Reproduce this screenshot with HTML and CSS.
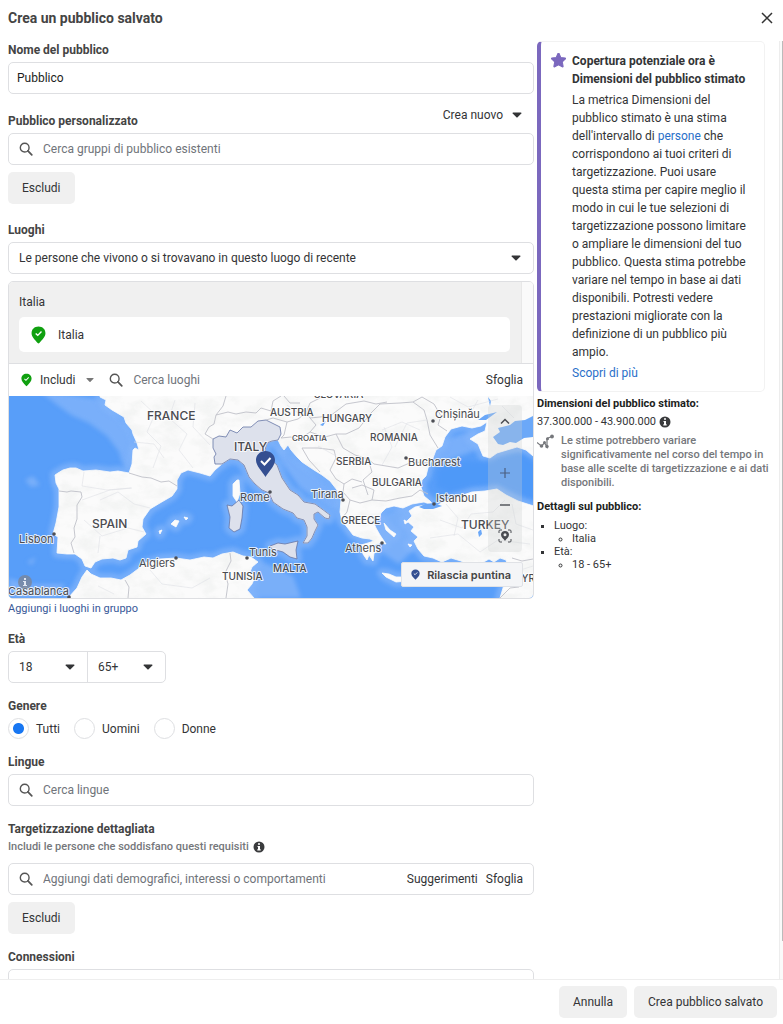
FILE: index.html
```html
<!DOCTYPE html>
<html lang="it">

<head>
    <meta charset="utf-8" />
    <meta name="viewport" content="width=device-width, initial-scale=1">
    <title>Crea un pubblico salvato</title>
    <link rel="stylesheet" href="styles.css">
</head>

<body>
    <!-- shared icons -->
    <svg class="defs" width="0" height="0" aria-hidden="true">
        <symbol id="search" viewBox="0 0 16 16">
            <circle cx="6.5" cy="6.5" r="5" fill="none" stroke="currentColor" stroke-width="1.6" />
            <path d="M10.2 10.2l4.4 4.4" stroke="currentColor" stroke-width="2" stroke-linecap="round" />
        </symbol>
        <symbol id="caret" viewBox="0 0 10 6">
            <path d="M1 .5h8q.8.3.3 1L5.6 5.3q-.6.5-1.2 0L.7 1.5Q.2.8 1 .5z" fill="currentColor" />
        </symbol>
        <symbol id="pin" viewBox="0 0 16 18">
            <path d="M8 0C3.6 0 .6 3 .6 7c0 4.300 4.100 7.200 6.500 10.500q.9 1 1.800 0C11.300 14.200 15.400 11.300 15.400 7 15.400 3 12.400 0 8 0z" fill="currentColor" />
            <path d="M5 7.300l2.200 2.100 4-4.100" fill="none" stroke="#fff" stroke-width="1.500" />
        </symbol>
        <symbol id="info" viewBox="0 0 12 12">
            <circle cx="6" cy="6" r="5.500" fill="currentColor" />
            <path d="M5 2.200h2v1.600H5zM4.500 4.900H7v3.400h.7v1.200H4.300V8.300H5V6h-.5z" fill="#fff" />
        </symbol>
    </svg>

    <div class="dialog">
        <header class="header">
            <h1>Crea un pubblico salvato</h1>
            <button type="button" class="close" aria-label="Chiudi">
                <svg width="12" height="12" viewBox="0 0 12 12"><path d="M1 1l10 10M11 1L1 11" stroke="#333" stroke-width="1.500" /></svg>
            </button>
        </header>

        <div class="content">
            <main class="main">
                <form class="form" id="audience">
                    <div class="field">
                        <label for="name">Nome del pubblico</label>
                        <input class="box name" id="name" type="text" value="Pubblico">
                    </div>

                    <div class="field custom">
                        <div class="label-row">
                            <label for="custom">Pubblico personalizzato</label>
                            <button type="button" class="create">Crea nuovo <svg class="caret"><use href="#caret" /></svg></button>
                        </div>
                        <div class="box search">
                            <svg class="glass"><use href="#search" /></svg>
                            <input id="custom" type="text" placeholder="Cerca gruppi di pubblico esistenti">
                        </div>
                        <button type="button" class="btn">Escludi</button>
                    </div>

                    <div class="field places">
                        <label for="place-type">Luoghi</label>
                        <div class="select box">
                            <select id="place-type">
                                <option>Le persone che vivono o si trovavano in questo luogo di recente</option>
                            </select>
                            <svg class="caret"><use href="#caret" /></svg>
                        </div>

                        <div class="geo">
                            <div class="chosen">
                                <div class="chosen-list">
                                    <p>Italia</p>
                                    <div class="place"><svg class="pin-big"><use href="#pin" /></svg>Italia</div>
                                </div>
                                <div class="track"></div>
                            </div>
                            <div class="geo-bar">
                                <button type="button" class="include"><svg class="pin-small"><use href="#pin" /></svg>Includi<svg class="caret"><use href="#caret" /></svg></button>
                                <svg class="glass"><use href="#search" /></svg>
                                <input type="text" aria-label="Cerca luoghi" placeholder="Cerca luoghi">
                                <button type="button" class="plain">Sfoglia</button>
                            </div>
                            <div class="map">
                                <svg class="map-art" viewBox="9 396 524 202" preserveAspectRatio="xMidYMid slice">
                                    <defs>
                                        <path id="europe" d="M100 390L100 397 106 400 105 405 112 410 124 417 126 423 132 430 133 434 137 443 139 450 135 448 133 450 132 464 129 473 118 471 110 472 96 470 83 471 76 468 70 468 63 470 58 473 55 475 56 483 59 489 59 507 56 523 53 534 58 537 57 553 67 554 75 554 82 559 85 566 91 568 95 562 102 559 113 558 120 560 126 558 128 550 137 547 138 541 146 534 142 527 143 519 150 509 160 503 172 496 177 489 177 480 181 473 188 470 200 473 210 476 215 470 222 464 230 459 238 460 244 465 249 477 255 484 262 490 269 493 273 502 283 509 293 513 297 518 304 520 307 527 307 536 303 543 308 543 312 538 315 531 318 525 314 519 314 514 318 512 325 518 329 519 330 515 322 509 315 504 304 502 298 495 290 490 282 478 277 465 269 458 265 450 267 443 272 441 278 440 281 446 284 450 288 445 291 450 297 457 302 462 314 470 322 475 330 481 337 490 341 500 340 512 342 521 347 527 353 535 362 538 370 539 374 541 368 543 361 545 363 554 367 560 369 555 373 561 374 553 377 552 374 545 380 543 386 544 380 535 376 528 373 521 374 517 379 519 381 513 386 508 394 506 403 508 412 504 424 502 434 506 430 501 424 496 421 487 422 480 426 476 428 468 433 458 436 450 442 446 445 437 451 429 462 426 472 428 481 426 487 422 485 431 478 434 470 439 478 444 483 456 490 458 497 453 507 450 517 447 526 450 540 462V390z" />
                                        <path id="turkey" d="M434 507L445 501 460 496 472 492 485 491 497 489 506 495 518 501 540 508V610H498L500 598 503 588 506 577 508 567 506 560 500 558 494 562 489 559 482 563 472 567 461 561 451 558 442 562 433 558 424 556 418 549 414 541 418 537 411 531 414 527 407 521 412 516 409 511 415 507 425 505z" />
                                        <path id="africa" d="M60 610L68 598 77 588 82 577 87 570 91 574 100 578 111 578 121 580 130 575 138 569 145 563 160 559 176 558 190 560 204 557 213 558 222 554 233 552 243 556 251 557 258 562 252 567 250 572 255 577 252 584 247 590 254 598V610z" />
                                        <path id="isles" d="M233 484L237 480 239 480 240 493 237 502 233 496zM382 573L389 574 396 577 405 577 408 581 396 582 386 577zM171 524L175 520 179 521 176 527zM184 517L188 518 186 520zM159 531L162 530 160 534zM384 523L390 530 396 534 394 537 386 530zM404 520L408 522 405 524zM408 544L412 545 410 547z" />
                                        <path id="italy" d="M213 439L219 436 226 437 230 430 237 433 243 427 251 427 258 421 266 420 280 427 281 434 278 440 272 441 267 443 265 450 269 458 277 465 282 478 290 490 298 495 304 502 315 504 322 509 330 515 329 519 325 518 318 512 314 514 314 519 318 525 315 531 312 538 308 543 303 543 307 536 307 527 304 520 297 518 293 513 283 509 273 502 269 493 262 490 255 484 249 477 244 465 238 460 230 459 222 464 215 464 214 457 216 454 213 448zM227 505L232 506 239 500 243 506 242 518 240 529 234 532 229 528 230 517zM270 546L278 543 285 544 298 541 296 550 297 559 290 557 283 552 272 549z" />
                                        <filter id="soft"><feGaussianBlur stdDeviation="2" /></filter>
                                        <filter id="relief" x="0" y="0" width="100%" height="100%">
                                            <feTurbulence type="fractalNoise" baseFrequency=".05 .08" numOctaves="4" seed="8" />
                                            <feColorMatrix values="0 0 0 0 .72  0 0 0 0 .75  0 0 0 0 .73  1.800 0 0 0 -.75" />
                                        </filter>
                                        <clipPath id="land"><use href="#europe" /><use href="#turkey" /><use href="#africa" /></clipPath>
                                    </defs>
                                    <path d="M9 396h524v202H9z" fill="#589ef9" />
                                    <!-- shallow water -->
                                    <g fill="#84b5fa" opacity=".75" filter="url(#soft)">
                                        <path d="M38 390L56 404 71 415 89 423 107 436 119 452 122 463 128 472 136 450 130 430 105 400z" />
                                        <path d="M25 480L33 476 40 485 31 487zM27 562L36 557 32 565zM268 440L282 448 330 486 342 504 334 512 300 488 282 464zM9 578L27 584 65 584 57 598H9zM345 530L415 502 423 540 399 564 375 548zM425 445L475 430 482 448 435 465zM245 560L265 563 293 576 301 598H245z" />
                                    </g>
                                    <g fill="none" stroke="#83b5fb" stroke-width="10" stroke-linejoin="round" opacity=".7" filter="url(#soft)">
                                        <use href="#europe" /><use href="#turkey" /><use href="#africa" /><use href="#isles" /><use href="#italy" />
                                    </g>
                                    <path d="M437 470Q455 458 480 462L505 456 520 453 540 462V502L510 490 497 484 473 486 450 492 436 487z" fill="#4c97f8" opacity=".7" filter="url(#soft)" />
                                    <g fill="#fbfbfb" stroke="#fbfbfb" stroke-width=".8">
                                        <use href="#europe" /><use href="#turkey" /><use href="#africa" /><use href="#isles" />
                                    </g>
                                    <path d="M9 396h524v202H9z" filter="url(#relief)" clip-path="url(#land)" opacity=".35" />
                                    <!-- Azov, Marmara, lakes -->
                                    <path d="M493 437L500 432 498 428 510 425 515 421 525 420 533 416V437L524 438 516 443 510 442 503 445 498 444zM419 507L425 504 434 503 442 506 433 509 424 509zM478 532L481 529 482 534 479 537zM320 425L326 421 323 426zM478 420L485 415 497 412 486 420zM488 397L491 401 490 406z" fill="#6ba8f8" />
                                    <use href="#italy" fill="#dde1ec" stroke="#6676a6" stroke-width=".8" />
                                    <!-- country borders -->
                                    <g fill="none" stroke="#bfc1c8" stroke-width=".9" stroke-linejoin="round">
                                        <path d="M129 473L142 477 151 478 161 482 169 481 177 486M59 491L67 492 71 491 81 492 82 497 77 505 77 519 74 528 75 537 71 543 74 553M213 439L205 434 209 427 214 424 216 415 223 406 226 396M216 415L228 412 236 414 246 412 256 413 261 408 271 411M271 411L273 401 281 396M266 420L273 418 287 422 298 419 306 413 310 403 322 397M287 422L284 435 281 438M281 438L291 437 298 440 310 432 316 425 310 418 306 413M302 448L318 448 334 450 336 458 330 470 336 479M302 448L309 460 320 472M310 432L325 437 336 434 346 434M336 434L343 448 355 455 368 459 372 472 363 480 368 495M336 479L344 484 343 492 350 500 347 512 342 518M344 484L352 479 362 482M350 500L360 503 372 500 374 490 362 485 352 488M310 418L330 416 346 404 364 401 376 404 387 402M346 434L359 428 371 413 380 404 400 403 413 402M368 459L374 464 398 468 412 462 430 463M413 402L424 410 427 420 430 435 438 448M413 402L422 397 434 404 441 416 438 425 447 431M372 500L386 501 400 498 412 496 420 490 428 494M125 580L129 587 128 598M230 553L231 561 225 573 228 584 226 598M512 558L522 561 533 559M500 598L510 588 519 587 525 575M284 396L290 403 300 403" />
                                    </g>
                                    <g fill="none" stroke="#dfe0e5" stroke-width=".6" stroke-linejoin="round">
                                        <path d="M141 401L155 414 147 432 161 446 153 468M175 400L169 418 187 434 179 450 193 468M134 442L154 444 164 458M84 472L82 486 107 490 131 488M82 500L110 490 132 488M84 520L102 536 128 528 144 532M100 500L118 492 134 504 150 508M98 553L100 536M195 403L193 427 210 445M150 570L162 584 192 588 210 578M98 586L114 594M440 520L462 528 471 514 493 512 505 500M430 538L458 534 480 552 498 540 530 544M446 504L458 518 454 536M512 504L516 524 533 530M382 430L402 422 420 430M382 465L392 447 384 427M395 447L407 423 427 420M318 446L336 456M287 405L301 415M450 397L468 407 498 399M502 406L514 418M478 400L470 414M508 574L533 566" />
                                    </g>
                                    <g class="country">
                                        <text x="147" y="420">FRANCE</text>
                                        <text x="234" y="451">ITALY</text>
                                        <text x="92" y="528">SPAIN</text>
                                        <text x="461" y="529">TURKEY</text>
                                    </g>
                                    <g class="country small">
                                        <text x="270" y="416">AUSTRIA</text>
                                        <text x="322" y="422">HUNGARY</text>
                                        <text x="370" y="441">ROMANIA</text>
                                        <text x="336" y="465">SERBIA</text>
                                        <text x="372" y="486">BULGARIA</text>
                                        <text x="341" y="524">GREECE</text>
                                        <text x="273" y="572">MALTA</text>
                                        <text x="222" y="580">TUNISIA</text>
                                        <text x="314" y="398">SLOVAKIA</text>
                                        <text x="515" y="582">SYRIA</text>
                                        <text class="tiny" x="292" y="441">CROATIA</text>
                                    </g>
                                    <g class="city">
                                        <text x="435" y="418">Chișinău</text>
                                        <text x="408" y="466">Bucharest</text>
                                        <text x="436" y="502">Istanbul</text>
                                        <text x="311" y="498">Tirana</text>
                                        <text x="345" y="552">Athens</text>
                                        <text x="240" y="501">Rome</text>
                                        <text x="249" y="556">Tunis</text>
                                        <text x="139" y="567">Algiers</text>
                                        <text x="19" y="543">Lisbon</text>
                                        <text x="8" y="595">Casablanca</text>
                                    </g>
                                    <g fill="#4c4e55">
                                        <circle cx="433" cy="421" r="1.800" /><circle cx="406" cy="458" r="1.800" /><circle cx="434" cy="504" r="1.800" /><circle cx="343" cy="500" r="1.800" /><circle cx="382" cy="543" r="1.800" /><circle cx="270" cy="492" r="1.800" /><circle cx="247" cy="558" r="1.800" /><circle cx="176" cy="558" r="1.800" /><circle cx="54" cy="534" r="1.800" /><circle cx="69" cy="597" r="1.800" />
                                    </g>
                                    <circle cx="25" cy="582" r="7" fill="#7a8598" opacity=".8" />
                                    <path d="M24 578h2v2h-2zM23 581h3v4h1v1h-4v-1h1v-3h-1z" fill="#dfe6f2" />
                                    <!-- marker on Italy -->
                                    <path d="M265.500 451c-5.500 0-9.500 4-9.500 9 0 6 6 11 9.500 17 3.500-6 9.500-11 9.500-17 0-5-4-9-9.500-9z" fill="#344f91" />
                                    <path d="M261 461l3.500 3.500 6-6.500" fill="none" stroke="#fff" stroke-width="2" />
                                </svg>
                                <div class="map-tools">
                                    <button type="button" aria-label="Su"><svg width="10" height="6" viewBox="0 0 10 6"><path d="M1 5.500l4-4 4 4" fill="none" stroke="#4b4d52" stroke-width="1.500" /></svg></button>
                                    <button type="button" aria-label="Ingrandisci"><svg width="10" height="10" viewBox="0 0 10 10"><path d="M5 0v10M0 5h10" stroke="#4b5f80" stroke-width="1.200" /></svg></button>
                                    <button type="button" aria-label="Riduci"><svg width="10" height="2" viewBox="0 0 10 2"><path d="M0 1h10" stroke="#55585e" stroke-width="1.300" /></svg></button>
                                    <button type="button" aria-label="Posizione"><svg width="14" height="14" viewBox="0 0 14 14"><path d="M1 4V2q0-1 1-1h2M10 1h2q1 0 1 1v2M13 10v2q0 1-1 1h-2M4 13H2q-1 0-1-1v-2" fill="none" stroke="#4b4d52" /><path d="M7 2C4.500 2 3 3.600 3 5.700 3 8.200 5.500 9.500 7 12c1.500-2.500 4-3.800 4-6.300C11 3.600 9.500 2 7 2zm0 2.200a1.500 1.500 0 1 1 0 3 1.500 1.500 0 0 1 0-3z" fill="#4b4d52" fill-rule="evenodd" /></svg></button>
                                </div>
                                <button type="button" class="drop-pin"><svg><use href="#pin" /></svg>Rilascia puntina</button>
                            </div>
                        </div>
                        <a class="group-link" href="#">Aggiungi i luoghi in gruppo</a>
                    </div>

                    <div class="field" role="group" aria-labelledby="age-label">
                        <span class="label" id="age-label">Età</span>
                        <div class="ages">
                            <div class="select"><select aria-label="Età minima"><option>18</option></select><svg class="caret"><use href="#caret" /></svg></div>
                            <div class="select"><select aria-label="Età massima"><option>65+</option></select><svg class="caret"><use href="#caret" /></svg></div>
                        </div>
                    </div>

                    <div class="field" role="radiogroup" aria-labelledby="gender-label">
                        <span class="label" id="gender-label">Genere</span>
                        <div class="radios">
                            <label><input type="radio" name="gender" checked>Tutti</label>
                            <label><input type="radio" name="gender">Uomini</label>
                            <label><input type="radio" name="gender">Donne</label>
                        </div>
                    </div>

                    <div class="field">
                        <label for="languages">Lingue</label>
                        <div class="box search">
                            <svg class="glass"><use href="#search" /></svg>
                            <input id="languages" type="text" placeholder="Cerca lingue">
                        </div>
                    </div>

                    <div class="field">
                        <label for="targeting">Targetizzazione dettagliata</label>
                        <p class="hint">Includi le persone che soddisfano questi requisiti <svg class="info"><use href="#info" /></svg></p>
                        <div class="box search">
                            <svg class="glass"><use href="#search" /></svg>
                            <input id="targeting" type="text" placeholder="Aggiungi dati demografici, interessi o comportamenti">
                            <button type="button" class="plain">Suggerimenti</button>
                            <button type="button" class="plain">Sfoglia</button>
                        </div>
                        <button type="button" class="btn">Escludi</button>
                    </div>

                    <div class="field">
                        <label for="connections">Connessioni</label>
                        <div class="select box">
                            <select id="connections"><option>Aggiungi un tipo di connessione</option></select>
                        </div>
                    </div>
                </form>

                <aside class="side">
                    <section class="notice">
                        <svg class="star" viewBox="0 0 14 14"><path d="M7 .3q.5 0 .7.500l1.500 3.500 3.900.4q.9.200.3.900l-2.900 2.700.8 4q0 .9-.8.500L7 10.900l-3.500 1.900q-.8.400-.8-.5l.8-4L.6 5.600Q0 4.900.9 4.700l3.900-.4L6.300.8Q6.500.3 7 .3z" fill="#7b68be" stroke="#7b68be" /></svg>
                        <div>
                            <h2>Copertura potenziale ora è Dimensioni del pubblico stimato</h2>
                            <p>La metrica Dimensioni del pubblico stimato è una stima dell'intervallo di <a href="#">persone</a> che corrispondono ai tuoi criteri di targetizzazione. Puoi usare questa stima per capire meglio il modo in cui le tue selezioni di targetizzazione possono limitare o ampliare le dimensioni del tuo pubblico. Questa stima potrebbe variare nel tempo in base ai dati disponibili. Potresti vedere prestazioni migliorate con la definizione di un pubblico più ampio.</p>
                            <a href="#">Scopri di più</a>
                        </div>
                    </section>
                    <section class="estimate">
                        <h3>Dimensioni del pubblico stimato:</h3>
                        <p class="range">37.300.000 - 43.900.000 <svg class="info"><use href="#info" /></svg></p>
                        <div class="warning">
                            <svg width="17" height="16" viewBox="0 0 17 16" fill="#75777b"><path d="M0 8.500q2 1.500 4.500 3.500L7.500 9 10 13V4.500L15 2.500" fill="none" stroke="#75777b" stroke-width="1.200" /><circle cx="4.500" cy="12" r="1.800" /><circle cx="7.500" cy="8.500" r="1.500" /><circle cx="10" cy="12.500" r="1.700" /><circle cx="10.500" cy="4.800" r="1.500" /><circle cx="15" cy="2.500" r="1.900" /></svg>
                            <p>Le stime potrebbero variare significativamente nel corso del tempo in base alle scelte di targetizzazione e ai dati disponibili.</p>
                        </div>
                        <h3>Dettagli sul pubblico:</h3>
                        <ul class="details">
                            <li>Luogo:<ul><li>Italia</li></ul></li>
                            <li>Età:<ul><li>18 - 65+</li></ul></li>
                        </ul>
                    </section>
                </aside>
            </main>
            <div class="scrollbar"><div class="thumb"></div></div>
        </div>

        <footer class="footer">
            <button type="button" class="btn">Annulla</button>
            <button type="submit" form="audience" class="btn">Crea pubblico salvato</button>
        </footer>
    </div>
</body>

</html>
```
FILE: styles.css
```css
* {
    box-sizing: border-box;
    margin: 0;
    padding: 0;
}

body {
    font: 12px/16px Roboto, "Liberation Sans", sans-serif;
    color: #333436;
    background: #fff;
}

button,
input,
select {
    font: inherit;
    color: inherit;
    background: none;
    border: 0;
    outline: 0;
}

button {
    cursor: pointer;
}

a {
    color: #2a6fc9;
    text-decoration: none;
}

svg {
    display: block;
    flex: none;
}

.defs {
    position: absolute;
}

.dialog {
    display: flex;
    flex-direction: column;
    height: 100vh;
    overflow: hidden;
}

/* header */
.header {
    display: flex;
    justify-content: space-between;
    align-items: center;
    height: 36px;
    padding: 0 10px 0 8px;
    flex: none;
}

.header h1 {
    font-size: 14px;
    font-weight: 700;
    color: #444;
}

.close {
    display: flex;
}

/* content */
.content {
    display: flex;
    flex: 1;
    min-height: 0;
    padding-top: 5px;
}

.main {
    flex: 1;
    display: grid;
    grid-template-columns: minmax(0, 1fr) 236px;
    gap: 3px;
    align-items: start;
    padding: 0 6px 0 8px;
    overflow: hidden;
}

.scrollbar {
    width: 4px;
    background: #fafafa;
    border-left: 1px solid #ededed;
}

.thumb {
    width: 1px;
    height: 96%;
    margin-left: auto;
    background: #bbb;
}

.form {
    display: flex;
    flex-direction: column;
    gap: 15px;
    padding-top: 1px;
}

.field {
    display: flex;
    flex-direction: column;
    align-items: stretch;
}

.field > label,
.label-row label,
.label {
    font-weight: 700;
    color: #444;
    margin-bottom: 4px;
}

.custom {
    margin-top: -2px;
}

.places {
    margin-top: 3px;
}

.label-row {
    display: flex;
    justify-content: space-between;
    align-items: flex-end;
    height: 26px;
}

.create {
    display: flex;
    align-items: center;
    gap: 9px;
    align-self: flex-start;
    padding-right: 12px;
}

.caret {
    width: 10px;
    height: 6px;
}

.box {
    display: flex;
    align-items: center;
    height: 32px;
    border: 1px solid #dedfe2;
    border-radius: 5px;
}

.name {
    padding: 0 8px;
    color: #1c1e21;
}

.search {
    gap: 8px;
    padding: 0 10px;
}

.search input,
.geo-bar input {
    flex: 1;
    min-width: 0;
}

.search .glass {
    margin-right: 2px;
}

.glass {
    width: 14px;
    height: 14px;
    color: #555;
}

::placeholder {
    color: #70747a;
    opacity: 1;
}

.btn {
    height: 32px;
    padding: 0 14px;
    background: #f0f0f0;
    border-radius: 5px;
}

.field .btn {
    align-self: flex-start;
    margin-top: 7px;
}

.select {
    display: grid;
    align-items: center;
}

.select > * {
    grid-area: 1 / 1;
}

.select select {
    appearance: none;
    width: 100%;
    height: 30px;
    padding: 0 10px;
}

.select .caret {
    justify-self: end;
    margin-right: 12px;
    pointer-events: none;
}

/* places */
.geo {
    margin-top: 7px;
    border: 1px solid #dedfe2;
    border-radius: 5px;
    overflow: hidden;
}

.chosen {
    display: flex;
    background: #f0f0f0;
    border-bottom: 1px solid #dedfe2;
}

.chosen-list {
    flex: 1;
    padding: 12px 11px 11px 10px;
}

.chosen .track {
    width: 12px;
    background: #fafafa;
    border-left: 1px solid #e8e8e8;
}

.place {
    display: flex;
    align-items: center;
    gap: 12px;
    height: 35px;
    margin-top: 7px;
    padding: 0 12px;
    background: #fff;
    border-radius: 5px;
}

.pin-big {
    width: 15px;
    height: 18px;
    color: #10a010;
}

.geo-bar {
    display: flex;
    align-items: center;
    gap: 10px;
    height: 32px;
    padding: 0 10px 0 12px;
}

.include {
    display: flex;
    align-items: center;
    gap: 8px;
    margin-right: 5px;
}

.include .caret {
    width: 8px;
    color: #777;
    margin-left: 3px;
}

.pin-small {
    width: 11px;
    height: 14px;
    color: #10a010;
}

.map {
    position: relative;
    background: #589ef9;
}

.map-art {
    width: 100%;
    font-family: Inter, "Noto Sans", sans-serif;
}

.map-art text {
    fill: #4a4b50;
    stroke: #fff;
    stroke-opacity: .8;
    stroke-width: 2px;
    stroke-linejoin: round;
    paint-order: stroke;
}

.country {
    font-size: 12px;
    font-weight: 500;
}

.small {
    font-size: 10px;
}

.tiny {
    font-size: 8px;
}

.city {
    font-size: 11px;
}

.map-tools {
    position: absolute;
    top: 9px;
    right: 11px;
    display: flex;
    flex-direction: column;
    width: 34px;
    height: 147px;
    background: rgba(205, 207, 209, .3);
    border-radius: 4px;
}

.map-tools button {
    display: flex;
    align-items: center;
    justify-content: center;
    height: 32px;
}

.map-tools button:first-child {
    margin-bottom: 21px;
}

.drop-pin {
    position: absolute;
    right: 10px;
    bottom: 11px;
    display: flex;
    align-items: center;
    gap: 7px;
    height: 25px;
    padding: 0 11px 0 9px;
    font: 600 11px Inter, sans-serif;
    color: #444;
    background: #f4f5f7;
    border: 1px solid #e0e2e6;
    border-radius: 2px;
}

.drop-pin svg {
    width: 9px;
    height: 11px;
    color: #344f91;
}

.group-link {
    margin-top: 3px;
    font-size: 11px;
    line-height: 14px;
    color: #385898;
}

/* age */
.ages {
    display: flex;
    align-self: flex-start;
    border: 1px solid #dedfe2;
    border-radius: 5px;
}

.ages .select {
    width: 78px;
}

.ages .select + .select {
    border-left: 1px solid #dedfe2;
}

/* gender */
.radios {
    display: flex;
    gap: 14px;
}

.radios label {
    display: flex;
    align-items: center;
    gap: 7px;
}

.radios input {
    appearance: none;
    width: 21px;
    height: 21px;
    border: 1px solid #dedfe2;
    border-radius: 50%;
}

.radios input:checked {
    background: radial-gradient(circle, #1877f2 5px, transparent 6px);
}

.hint {
    display: flex;
    align-items: center;
    gap: 4px;
    margin: -2px 0 8px;
    font-size: 11px;
    font-weight: 500;
    color: #75777b;
}

.info {
    width: 12px;
    height: 12px;
    color: #3a3b3d;
}

/* right column */
.notice {
    display: flex;
    gap: 6px;
    margin-right: 8px;
    padding: 10px 13px 9px 10px;
    line-height: 18px;
    border: 1px solid #f2f2f2;
    border-left: 4px solid #7b68be;
    border-radius: 5px;
}

.star {
    width: 15px;
    height: 15px;
    margin-top: 1px;
}

.notice h2 {
    font-size: 12px;
    font-weight: 700;
}

.notice p {
    margin: 3px 0;
}

.estimate {
    padding-top: 4px;
}

.estimate h3 {
    font-size: 11px;
    font-weight: 700;
    color: #1c1e21;
}

.range {
    display: flex;
    align-items: center;
    gap: 3px;
    margin-top: 2px;
    font-size: 11px;
}

.warning {
    display: flex;
    gap: 7px;
    margin: 4px 0 9px;
    font-size: 11px;
    font-weight: 500;
    line-height: 14px;
    color: #75777b;
}

.details {
    margin-top: 4px;
    padding-left: 17px;
    font-size: 11px;
    line-height: 13px;
    list-style: square;
}

.details ul {
    padding-left: 18px;
    list-style: circle;
}

/* footer */
.footer {
    display: flex;
    justify-content: flex-end;
    gap: 7px;
    padding: 6px 6px 6px 8px;
    background: #fff;
    border-top: 1px solid #eee;
    flex: none;
}
```
